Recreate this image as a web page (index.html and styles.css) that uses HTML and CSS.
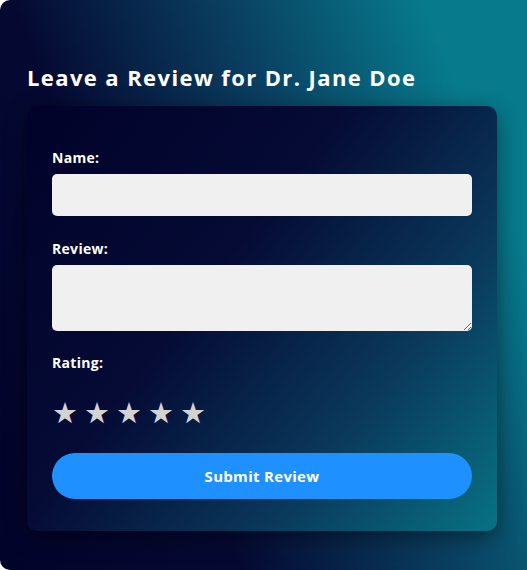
FILE: index.html
```html
<!DOCTYPE html>
<html lang="en">
<head>
<meta charset="utf-8">
<title>Leave a Review</title>
<link rel="stylesheet" href="styles.css">
</head>
<body>
  <div class="page">
    <h2 class="title">Leave a Review for Dr. Jane Doe</h2>
    <form class="card">
      <label class="label" for="name">Name:</label>
      <input class="field" id="name" type="text">
      <label class="label" for="review">Review:</label>
      <textarea class="field area" id="review"></textarea>
      <label class="label">Rating:</label>
      <div class="stars">
        <span class="star">★</span><span class="star">★</span><span class="star">★</span><span class="star">★</span><span class="star">★</span>
      </div>
      <button class="submit" type="button">Submit Review</button>
    </form>
  </div>
</body>
</html>
```

FILE: styles.css
```css
html, body {
  margin: 0;
  padding: 0;
  background: #ffffff;
  overflow: hidden;
}

.page {
  box-sizing: border-box;
  height: 570px;
  padding: 63px 30px 0 27px;
  border-radius: 10px 0 0 10px;
  background: linear-gradient(68deg, #02032a 0%, #050932 32%, #0a3f60 60%, #077a8c 86%);
  font-family: "Comic Sans MS", "Open Sans", "DejaVu Sans", sans-serif;
  color: #ffffff;
}

.title {
  margin: 0;
  font-size: 22px;
  line-height: 28px;
  font-weight: 700;
  letter-spacing: 1.4px;
}

.card {
  margin-top: 15px;
  width: 470px;
  box-sizing: border-box;
  padding: 43px 25px 32px;
  border-radius: 10px;
  background: linear-gradient(128deg, #01022a 0%, #050b35 40%, #0a3a5c 72%, #087284 100%);
  box-shadow: 0 6px 22px rgba(0, 0, 0, 0.45);
  display: flex;
  flex-direction: column;
}

.label {
  display: block;
  font-size: 14px;
  line-height: 18px;
  font-weight: 700;
  letter-spacing: 0.3px;
}

.field {
  box-sizing: border-box;
  width: 420px;
  height: 42px;
  margin: 7px 0 24px;
  border: none;
  border-radius: 5px;
  background: #f0f0f0;
  font-family: inherit;
  font-size: 14px;
  padding: 8px 10px;
}

.area {
  height: 66px;
  margin-bottom: 23px;
  resize: vertical;
}

.stars {
  display: flex;
  gap: 6px;
  margin-top: 24px;
  height: 34px;
  align-items: center;
}

.star {
  font-family: "DejaVu Sans", sans-serif;
  font-size: 29px;
  line-height: 34px;
  color: #d3d3d3;
  width: 26px;
}

.submit {
  margin-top: 23px;
  height: 46px;
  width: 420px;
  border: none;
  border-radius: 23px;
  background: #1e90ff;
  color: #ffffff;
  font-family: inherit;
  font-size: 15px;
  font-weight: 700;
  letter-spacing: 0.3px;
}
```
